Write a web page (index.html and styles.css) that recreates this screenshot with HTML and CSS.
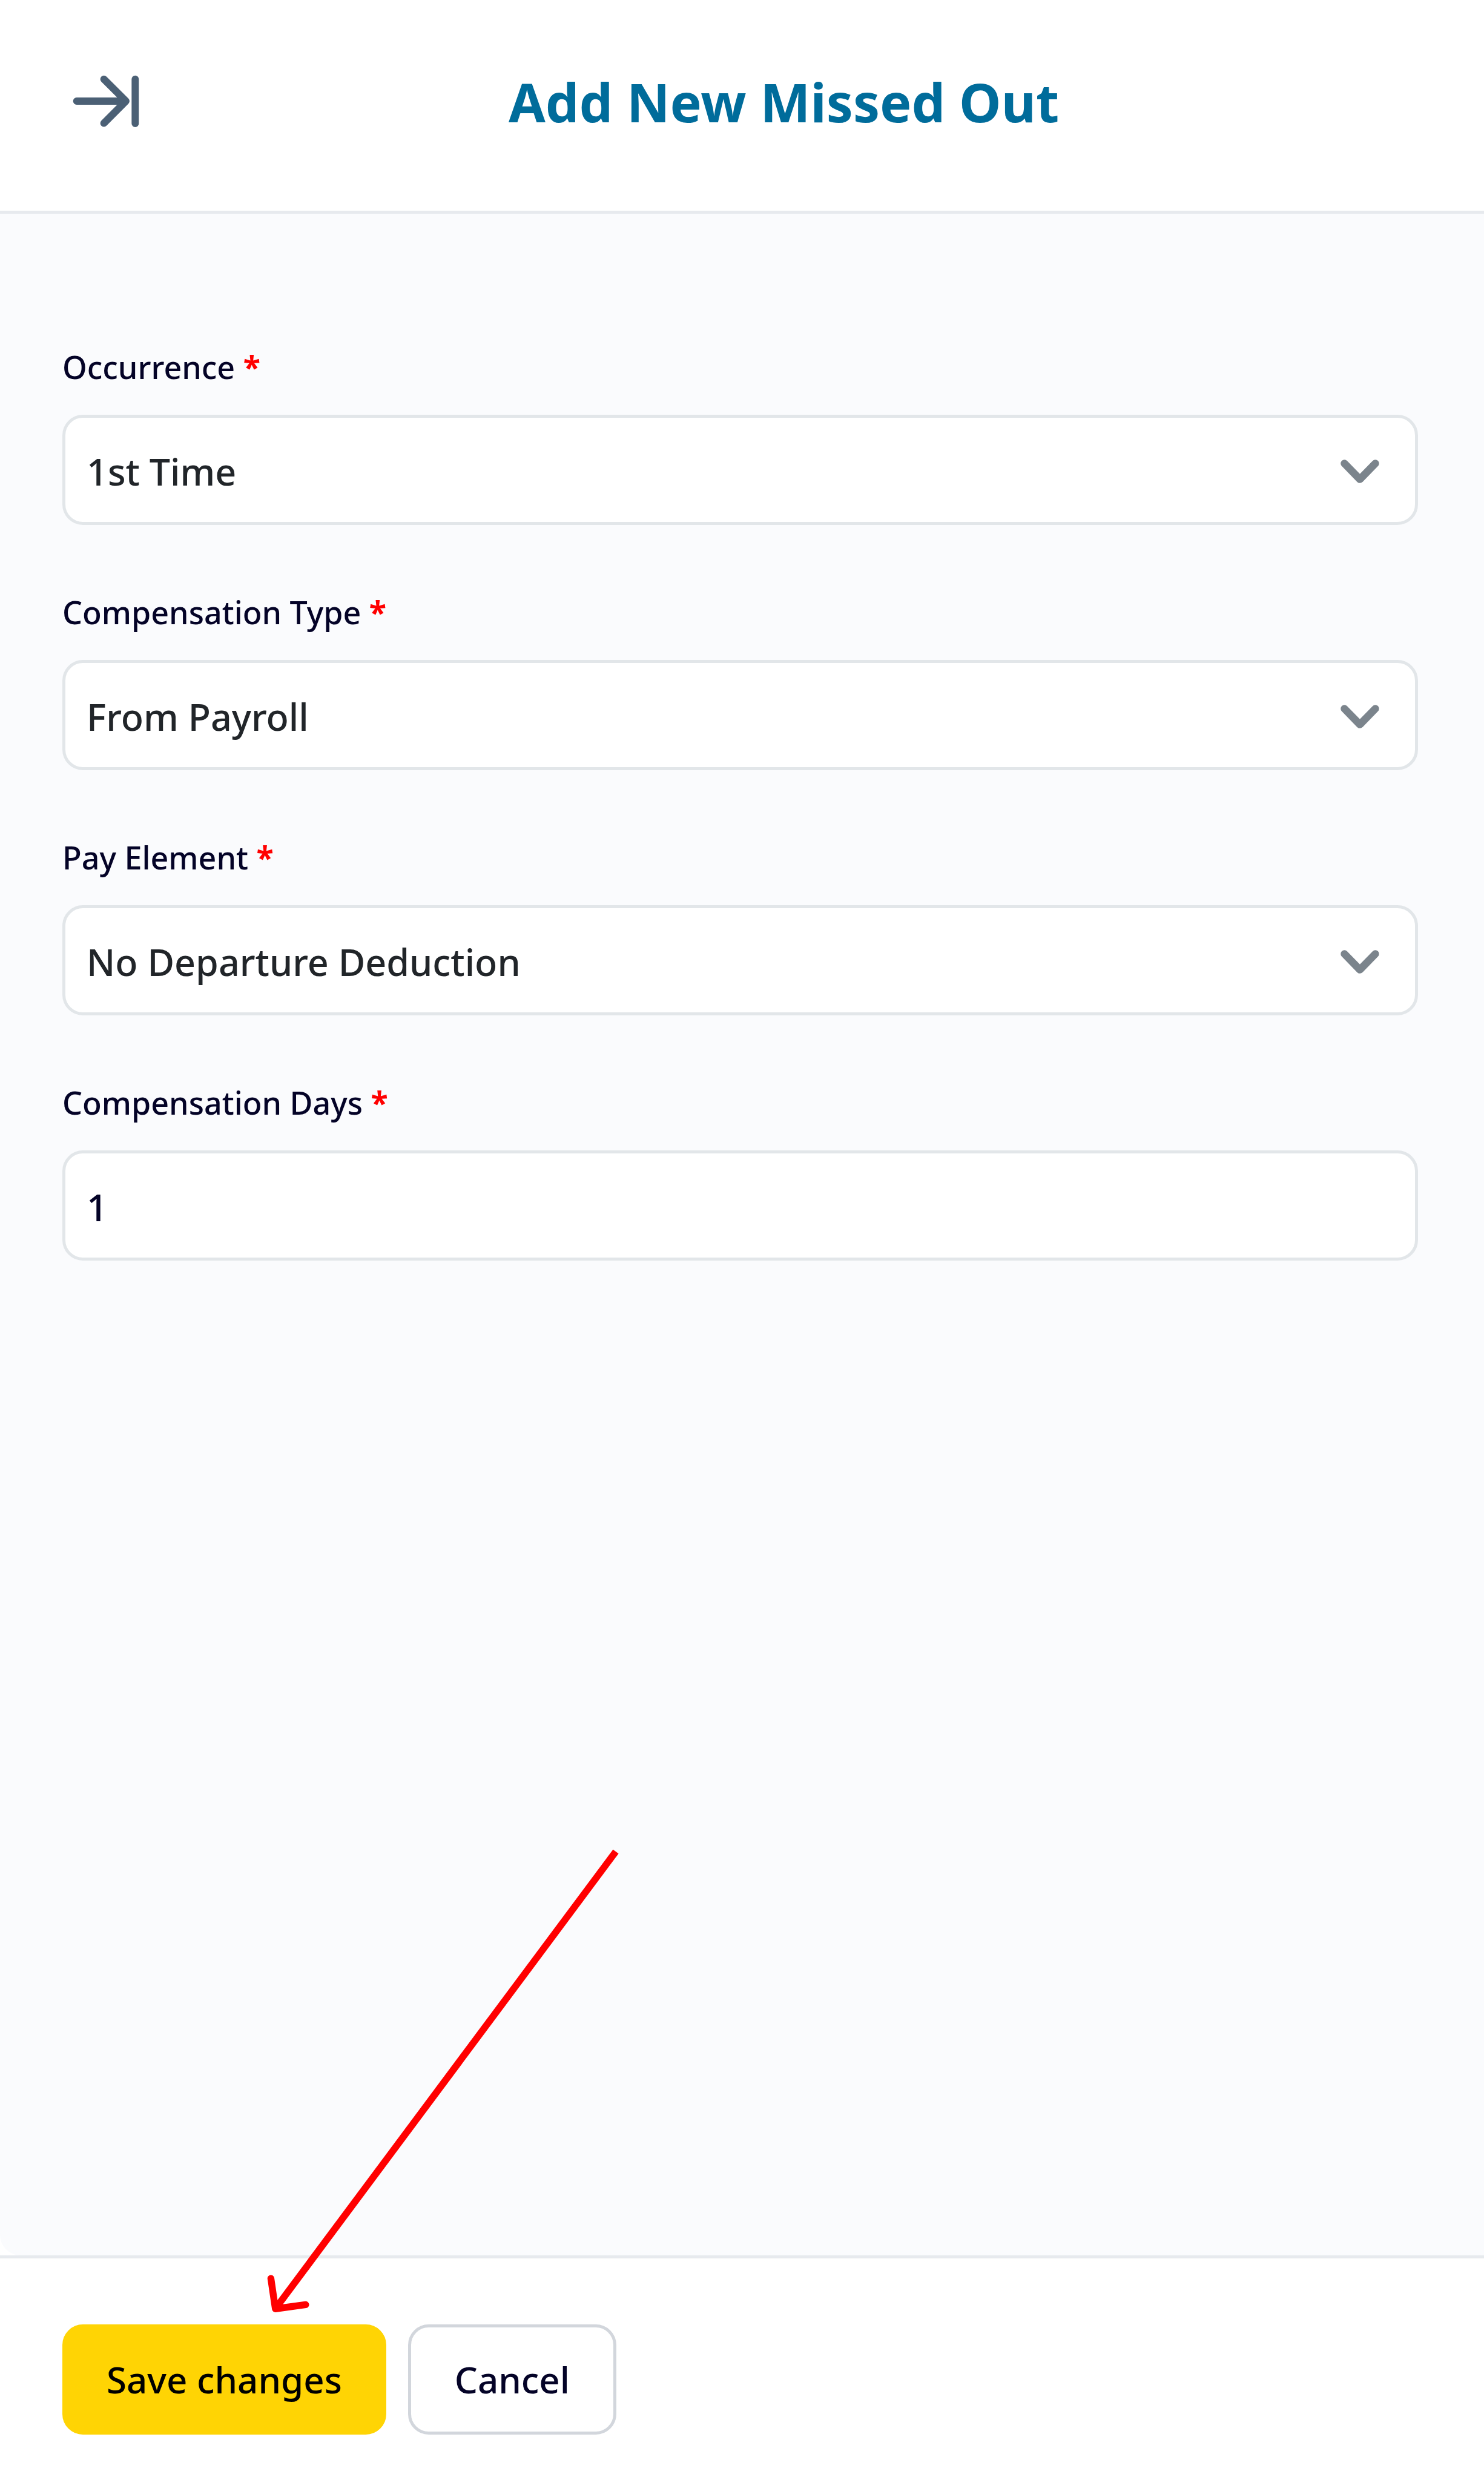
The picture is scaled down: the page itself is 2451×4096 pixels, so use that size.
FILE: index.html
```html
<!DOCTYPE html>
<html lang="en">
<head>
<meta charset="utf-8">
<title>Add New Missed Out</title>
<link rel="stylesheet" href="styles.css">
</head>
<body>
<form class="panel">
  <header class="panel-header">
    <button class="collapse" type="button" aria-label="Close panel">
      <svg class="collapse-icon" viewBox="206 214 204 164" aria-hidden="true">
        <path d="M223 295H366M302 231L366 295L302 359M393 231V360"/>
      </svg>
    </button>
    <h1 class="title">Add New Missed Out</h1>
  </header>

  <main class="panel-body">
    <div class="field">
      <label class="label" for="occurrence">Occurrence <span class="required">*</span></label>
      <div class="control">
        <select class="input" id="occurrence"><option>1st Time</option></select>
        <svg class="chevron" viewBox="0 0 120 76" aria-hidden="true"><path d="M15 15L60 61L105 15"/></svg>
      </div>
    </div>
    <div class="field">
      <label class="label" for="type">Compensation Type <span class="required">*</span></label>
      <div class="control">
        <select class="input" id="type"><option>From Payroll</option></select>
        <svg class="chevron" viewBox="0 0 120 76" aria-hidden="true"><path d="M15 15L60 61L105 15"/></svg>
      </div>
    </div>
    <div class="field">
      <label class="label" for="element">Pay Element <span class="required">*</span></label>
      <div class="control">
        <select class="input" id="element"><option>No Departure Deduction</option></select>
        <svg class="chevron" viewBox="0 0 120 76" aria-hidden="true"><path d="M15 15L60 61L105 15"/></svg>
      </div>
    </div>
    <div class="field">
      <label class="label" for="days">Compensation Days <span class="required">*</span></label>
      <div class="control">
        <input class="input input-text" id="days" type="text" value="1">
      </div>
    </div>
  </main>

  <footer class="panel-footer">
    <button class="button button-primary" type="submit">Save changes</button>
    <button class="button button-secondary" type="button">Cancel</button>
    <svg class="pointer" viewBox="774 5360 1028 1364" aria-hidden="true">
      <path d="M1788 5376L799 6704"/>
      <path class="pointer-head" d="M787 6615L800 6703L888 6691"/>
    </svg>
  </footer>
</form>
</body>
</html>
```
FILE: styles.css
```css
* {
  box-sizing: border-box;
}

body {
  margin: 0;
  background: #fff;
  color: #040327;
  font-family: "Noto Sans", "Open Sans", sans-serif;
  font-weight: 500;
}

.panel {
  display: flex;
  flex-direction: column;
  min-height: 100vh;
}

.panel-header {
  display: flex;
  align-items: center;
  padding: 92px 109px 104px 103px;
  border-bottom: 5px solid #e7eaee;
}

.collapse {
  display: flex;
  justify-content: center;
  width: 144px;
  padding: 0;
  border: 0;
  background: none;
}

.collapse-icon {
  width: 116px;
  fill: none;
  stroke: #4b6075;
  stroke-width: 21;
  stroke-linecap: round;
  stroke-linejoin: round;
}

.title {
  flex: 1;
  margin: 0;
  color: #006c9b;
  font-size: 88px;
  font-weight: 700;
  line-height: 152px;
  text-align: center;
}

.panel-body {
  display: flex;
  flex: 1;
  flex-direction: column;
  gap: 107px;
  padding: 216px 109px 107px 103px;
  border-bottom-left-radius: 34px;
  background: #fafbfd;
}

.field {
  display: flex;
  flex-direction: column;
  gap: 42px;
}

.label {
  font-size: 52px;
  line-height: 74px;
}

.required {
  color: #f00;
  font-weight: 700;
}

.control {
  display: grid;
  align-items: center;
}

.input {
  grid-area: 1 / 1;
  width: 100%;
  height: 182px;
  padding: 4px 35px 0;
  border: 5px solid #e2e6e9;
  border-radius: 34px;
  appearance: none;
  background: #fff;
  color: #212529;
  font: inherit;
  font-size: 61px;
}

.input-text {
  color: #040327;
}

.chevron {
  grid-area: 1 / 1;
  justify-self: end;
  width: 68px;
  margin-top: 6px;
  margin-right: 62px;
  fill: none;
  stroke: #7b848c;
  stroke-width: 22;
  stroke-linecap: round;
  stroke-linejoin: round;
  pointer-events: none;
}

.panel-footer {
  position: relative;
  display: flex;
  gap: 36px;
  padding: 109px 103px 75px;
  border-top: 5px solid #e7eaee;
}

.button {
  height: 182px;
  border: 5px solid;
  border-radius: 34px;
  font: inherit;
  font-size: 60px;
}

.button-primary {
  padding: 0 68px;
  border-color: #ffd404;
  background: #ffd404;
  color: #000;
}

.button-secondary {
  padding: 0 72px;
  border-color: #d2d6dc;
  background: #fff;
  color: #040327;
}

.pointer {
  position: absolute;
  bottom: 271px;
  left: 440px;
  width: 585px;
  fill: none;
  stroke: #f00;
  stroke-width: 20;
}

.pointer-head {
  stroke-linecap: round;
  stroke-linejoin: round;
}
```
